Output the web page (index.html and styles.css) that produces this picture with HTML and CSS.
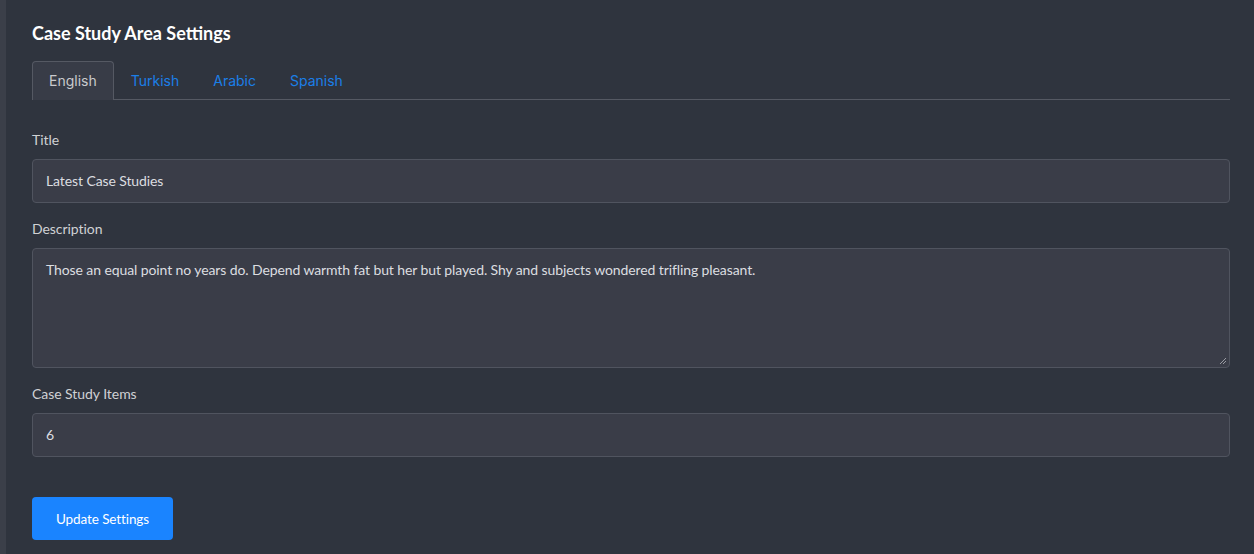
FILE: index.html
```html
<!DOCTYPE html>
<html>
<head>
<meta charset="utf-8">
<link rel="stylesheet" href="styles.css">
</head>
<body>
<div class="page">
  <div class="strip"></div>
  <main class="content">
    <h1 class="heading">Case Study Area Settings</h1>
    <nav class="tabs">
      <span class="tab active">English</span>
      <span class="tab">Turkish</span>
      <span class="tab">Arabic</span>
      <span class="tab">Spanish</span>
    </nav>
    <form class="form">
      <div class="field">
        <label class="label">Title</label>
        <div class="input">Latest Case Studies</div>
      </div>
      <div class="field">
        <label class="label">Description</label>
        <div class="input textarea">Those an equal point no years do. Depend warmth fat but her but played. Shy and subjects wondered trifling pleasant.
          <svg class="grip" width="8" height="8" viewBox="0 0 8 8"><path d="M7 1 L1 7 M7 4 L4 7" stroke="#9a9ca3" stroke-width="1"/></svg>
        </div>
      </div>
      <div class="field">
        <label class="label">Case Study Items</label>
        <div class="input">6</div>
      </div>
      <div class="actions">
        <button type="button" class="btn">Update Settings</button>
      </div>
    </form>
  </main>
</div>
</body>
</html>
```

FILE: styles.css
```css
* { box-sizing: border-box; }
html, body { margin: 0; padding: 0; }
body {
  background: #2f343e;
  font-family: Lato, "Open Sans", sans-serif;
  color: #d4d5d8;
}
.page {
  display: flex;
  width: 1254px;
  height: 554px;
  overflow: hidden;
}
.strip {
  width: 6px;
  background: #3b3f49;
  flex: none;
}
.content {
  flex: 1;
  padding: 22px 24px 0 26px;
}
.heading {
  margin: 0;
  font-size: 18px;
  font-weight: 700;
  color: #ffffff;
  line-height: 22px;
}
.tabs {
  display: flex;
  margin-top: 17px;
  height: 39px;
  border-bottom: 1px solid #555963;
}
.tab {
  font-family: Inter, "Open Sans", sans-serif;
  font-size: 14px;
  color: #1b7fe8;
  padding: 0 16px;
  line-height: 38px;
  border: 1px solid transparent;
  border-bottom: none;
  border-radius: 4px 4px 0 0;
}
.tab.active {
  color: #c9cacd;
  background: #383c47;
  border-color: #555963;
  padding: 0 16px;
  margin-bottom: -1px;
  height: 39px;
}
.form {
  margin-top: 30px;
}
.field {
  margin-bottom: 16px;
}
.label {
  display: block;
  font-size: 14px;
  line-height: 20px;
  color: #d0d1d4;
  margin-bottom: 9px;
  letter-spacing: -0.05px;
}
.input {
  height: 44px;
  background: #3a3d48;
  border: 1px solid #50545f;
  border-radius: 4px;
  padding: 0 13px;
  font-size: 14px;
  line-height: 42px;
  color: #dcdde0;
  letter-spacing: -0.1px;
}
.textarea {
  position: relative;
  height: 120px;
  line-height: 20px;
  padding-top: 11px;
}
.grip {
  position: absolute;
  right: 2px;
  bottom: 2px;
}
.actions {
  padding-top: 24px;
}
.btn {
  width: 141px;
  height: 43px;
  background: #1a84ff;
  border: none;
  border-radius: 4px;
  color: #ffffff;
  font-family: Lato, sans-serif;
  font-size: 13.5px;
  letter-spacing: -0.1px;
}
```
